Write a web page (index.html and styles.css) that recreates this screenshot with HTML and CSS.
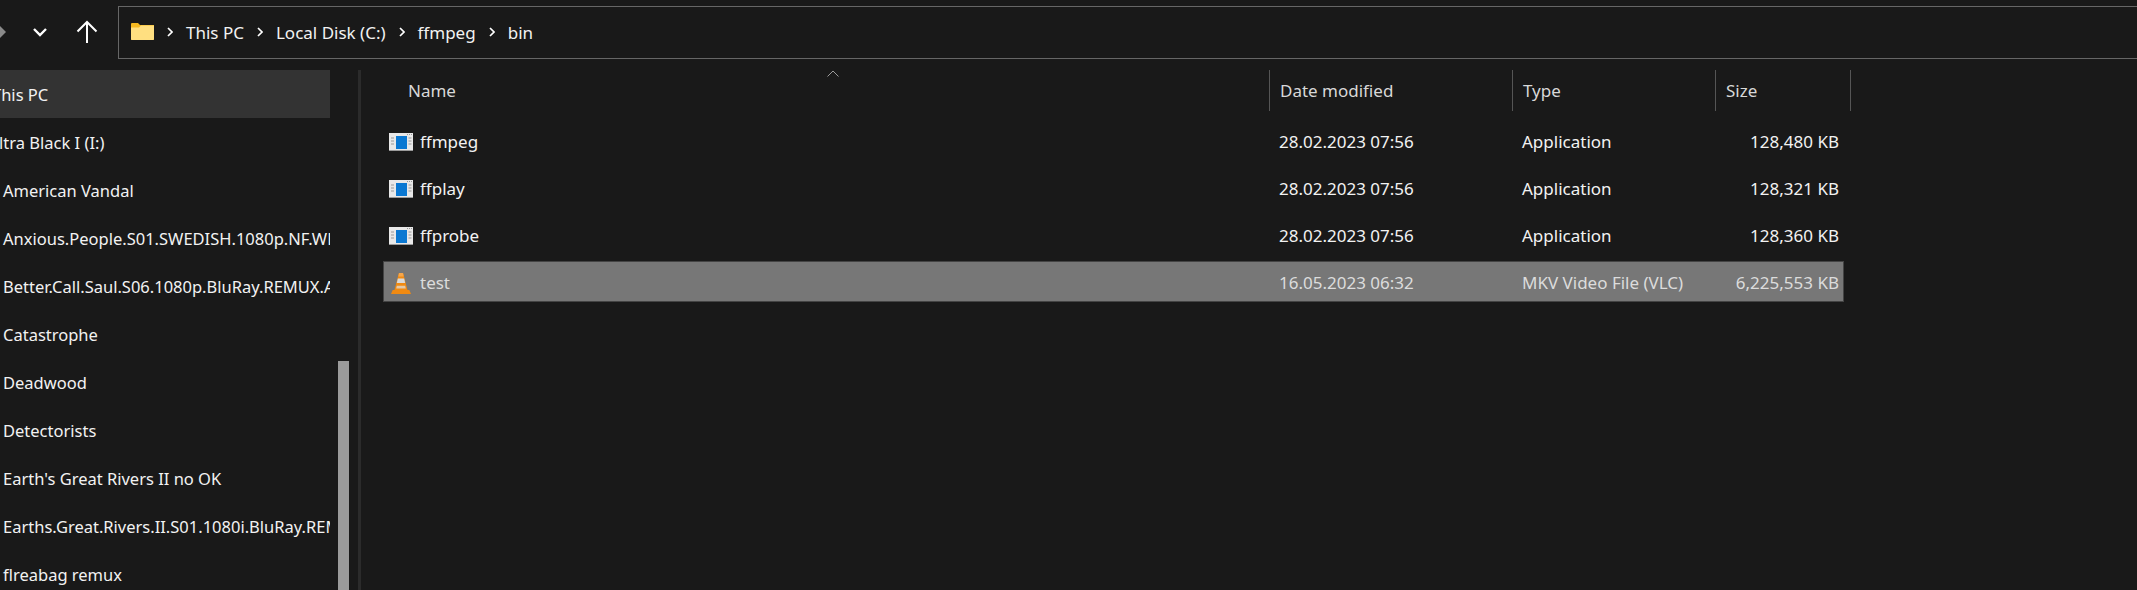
FILE: index.html
```html
<!DOCTYPE html>
<html lang="en">
<head>
<meta charset="utf-8">
<title>bin - File Explorer</title>
<link rel="stylesheet" href="styles.css">
</head>
<body>
<div class="window">
  <header class="toolbar">
    <div class="nav">
      <svg class="ico-fwd" width="8" height="16" viewBox="0 0 8 16"><path d="M-1 1 6 8-1 15" fill="#8a8a8a"/></svg>
      <svg class="ico-down" width="16" height="12" viewBox="0 0 16 12"><path d="M2 3l6 6 6-6" fill="none" stroke="#fff" stroke-width="2.4"/></svg>
      <svg class="ico-up" width="22" height="24" viewBox="0 0 22 24"><path d="M11 23V2M1.500 11.500 11 2l9.500 9.500" fill="none" stroke="#fff" stroke-width="2"/></svg>
    </div>
    <div class="address">
      <svg class="ico-folder" width="23" height="18" viewBox="0 0 23 18"><path d="M0 2a1 1 0 0 1 1-1h6l2 2h14v14a1 1 0 0 1-1 1H1a1 1 0 0 1-1-1z" fill="#f5b921"/><path d="M0 5.500h8l2-2h13V17a1 1 0 0 1-1 1H1a1 1 0 0 1-1-1z" fill="#ffdf80"/></svg>
      <svg class="crumb-sep" width="6" height="10" viewBox="0 0 6 10"><path d="M1 1l4 4-4 4" fill="none" stroke="#fff" stroke-width="1.700"/></svg><span class="crumb">This PC</span>
      <svg class="crumb-sep" width="6" height="10" viewBox="0 0 6 10"><path d="M1 1l4 4-4 4" fill="none" stroke="#fff" stroke-width="1.700"/></svg><span class="crumb">Local Disk (C:)</span>
      <svg class="crumb-sep" width="6" height="10" viewBox="0 0 6 10"><path d="M1 1l4 4-4 4" fill="none" stroke="#fff" stroke-width="1.700"/></svg><span class="crumb">ffmpeg</span>
      <svg class="crumb-sep" width="6" height="10" viewBox="0 0 6 10"><path d="M1 1l4 4-4 4" fill="none" stroke="#fff" stroke-width="1.700"/></svg><span class="crumb">bin</span>
    </div>
  </header>
  <div class="main">
    <aside class="sidebar">
      <ul class="tree">
        <li class="node node-current clip-this">This PC</li>
        <li class="node clip-ultra">Ultra Black I (I:)</li>
        <li class="node">American Vandal</li>
        <li class="node">Anxious.People.S01.SWEDISH.1080p.NF.WEB-DL</li>
        <li class="node">Better.Call.Saul.S06.1080p.BluRay.REMUX.AVC</li>
        <li class="node">Catastrophe</li>
        <li class="node">Deadwood</li>
        <li class="node">Detectorists</li>
        <li class="node">Earth's Great Rivers II no OK</li>
        <li class="node">Earths.Great.Rivers.II.S01.1080i.BluRay.REMUX</li>
        <li class="node">flreabag remux</li>
      </ul>
      <div class="scroll"><div class="thumb"></div></div>
    </aside>
    <div class="divider"></div>
    <section class="files">
      <div class="columns">
        <div class="col col-name">Name<svg class="sort" width="14" height="7" viewBox="0 0 14 7"><path d="M1.500 6.500 7 1l5.500 5.500" fill="none" stroke="#9a9a9a" stroke-width="1"/></svg></div>
        <div class="col">Date modified</div>
        <div class="col">Type</div>
        <div class="col">Size</div>
      </div>
      <div class="row">
        <div class="cell-name"><svg class="ico-app" width="24" height="18" viewBox="0 0 24 18"><rect width="24" height="18" fill="#e8e8e8"/><rect y="17" width="24" height="1" fill="#9a9a9a"/><rect x="7" y="3" width="11" height="13" fill="#0a78d2"/><path d="M2 5h3M2 8h3M2 11h3M19.500 5h3M19.500 8h3M19.500 11h3" stroke="#9a9a9a"/><path d="M18 1.500h5" stroke="#999" stroke-dasharray="1 1"/></svg>ffmpeg</div>
        <div>28.02.2023 07:56</div><div>Application</div><div class="size">128,480 KB</div>
      </div>
      <div class="row">
        <div class="cell-name"><svg class="ico-app" width="24" height="18" viewBox="0 0 24 18"><rect width="24" height="18" fill="#e8e8e8"/><rect y="17" width="24" height="1" fill="#9a9a9a"/><rect x="7" y="3" width="11" height="13" fill="#0a78d2"/><path d="M2 5h3M2 8h3M2 11h3M19.500 5h3M19.500 8h3M19.500 11h3" stroke="#9a9a9a"/><path d="M18 1.500h5" stroke="#999" stroke-dasharray="1 1"/></svg>ffplay</div>
        <div>28.02.2023 07:56</div><div>Application</div><div class="size">128,321 KB</div>
      </div>
      <div class="row">
        <div class="cell-name"><svg class="ico-app" width="24" height="18" viewBox="0 0 24 18"><rect width="24" height="18" fill="#e8e8e8"/><rect y="17" width="24" height="1" fill="#9a9a9a"/><rect x="7" y="3" width="11" height="13" fill="#0a78d2"/><path d="M2 5h3M2 8h3M2 11h3M19.500 5h3M19.500 8h3M19.500 11h3" stroke="#9a9a9a"/><path d="M18 1.500h5" stroke="#999" stroke-dasharray="1 1"/></svg>ffprobe</div>
        <div>28.02.2023 07:56</div><div>Application</div><div class="size">128,360 KB</div>
      </div>
      <div class="row row-selected">
        <div class="cell-name"><svg class="ico-vlc" width="20" height="22" viewBox="0 0 24 24" preserveAspectRatio="none"><path d="M2 19.500h20l2 4.500H0z" fill="#f08a12"/><path d="M9.500 1h5l5.500 19.500H4z" fill="#f08a12"/><path d="M9.600 1h4.800l.8 4H8.800z" fill="#f6a64a"/><path d="M8.200 7h7.600l1.200 5H7z" fill="#d9d9d9"/><path d="M7 15h10l.8 3H6.200z" fill="#ddd" opacity=".75"/></svg>test</div>
        <div>16.05.2023 06:32</div><div>MKV Video File (VLC)</div><div class="size">6,225,553 KB</div>
      </div>
    </section>
  </div>
</div>
</body>
</html>
```
FILE: styles.css
```css
* { box-sizing: border-box; }
html, body { margin: 0; height: 100%; overflow: hidden; background: #191919; }
body { font-family: "Noto Sans", "Open Sans", sans-serif; font-size: 17px; color: #f2f2f2; }
.window { display: flex; flex-direction: column; height: 590px; overflow: hidden; }

.toolbar { display: flex; height: 70px; padding-top: 6px; flex: none; }
.nav { width: 118px; flex: none; height: 52px; display: flex; align-items: center; }
.ico-down { margin-left: 24px; }
.ico-up { margin-left: 28px; }
.address { flex: 1; height: 53px; border: 1px solid #666; border-right: 0; display: flex; align-items: center; padding-left: 12px; }
.ico-folder { flex: none; margin-top: -4px; margin-right: 13px; }
.crumb-sep { flex: none; margin-right: 13px; margin-top: -1px; }
.crumb { margin-right: 13px; white-space: nowrap; }

.main { flex: 1; display: flex; min-height: 0; }
.sidebar { position: relative; width: 358px; flex: none; overflow: hidden; font-size: 16.500px; }
.tree { list-style: none; margin: 0; padding: 0; width: 330px; }
.node { height: 48px; line-height: 48px; padding: 1px 18px 0 3px; white-space: nowrap; overflow: hidden; }
.node-current { background: #333; }
.clip-this { text-indent: -11px; }
.clip-ultra { text-indent: -16px; }
.scroll { position: absolute; left: 338px; top: 0; bottom: 0; width: 11px; }
.thumb { position: absolute; top: 291px; bottom: 0; left: 0; right: 0; background: #9b9b9b; }
.divider { width: 3px; flex: none; background: #2b2b2b; }

.files { flex: 1; padding-left: 22px; min-width: 0; }
.columns { position: relative; display: grid; grid-template-columns: 887px 243px 203px 135px; height: 41px; margin-bottom: 9px; color: #d8d8d8; }
.col { border-right: 1px solid #555; padding-left: 10px; line-height: 41px; }
.col-name { padding-left: 25px; }
.sort { position: absolute; left: 443px; top: 0; }
.row { display: grid; grid-template-columns: 886px 243px 203px 129px; width: 1461px; height: 41px; margin-bottom: 6px; line-height: 41px; border: 1px solid transparent; }
.row > div { padding-left: 9px; white-space: nowrap; }
.row > .cell-name { display: flex; align-items: center; padding-left: 5px; gap: 7px; }
.row > .size { padding: 0 6px 0 0; text-align: right; }
.ico-app { flex: none; }
.ico-vlc { flex: none; margin: 1px 2px 0; }
.row-selected { background: #777; border-color: #444; color: #dcdcdc; }
```
